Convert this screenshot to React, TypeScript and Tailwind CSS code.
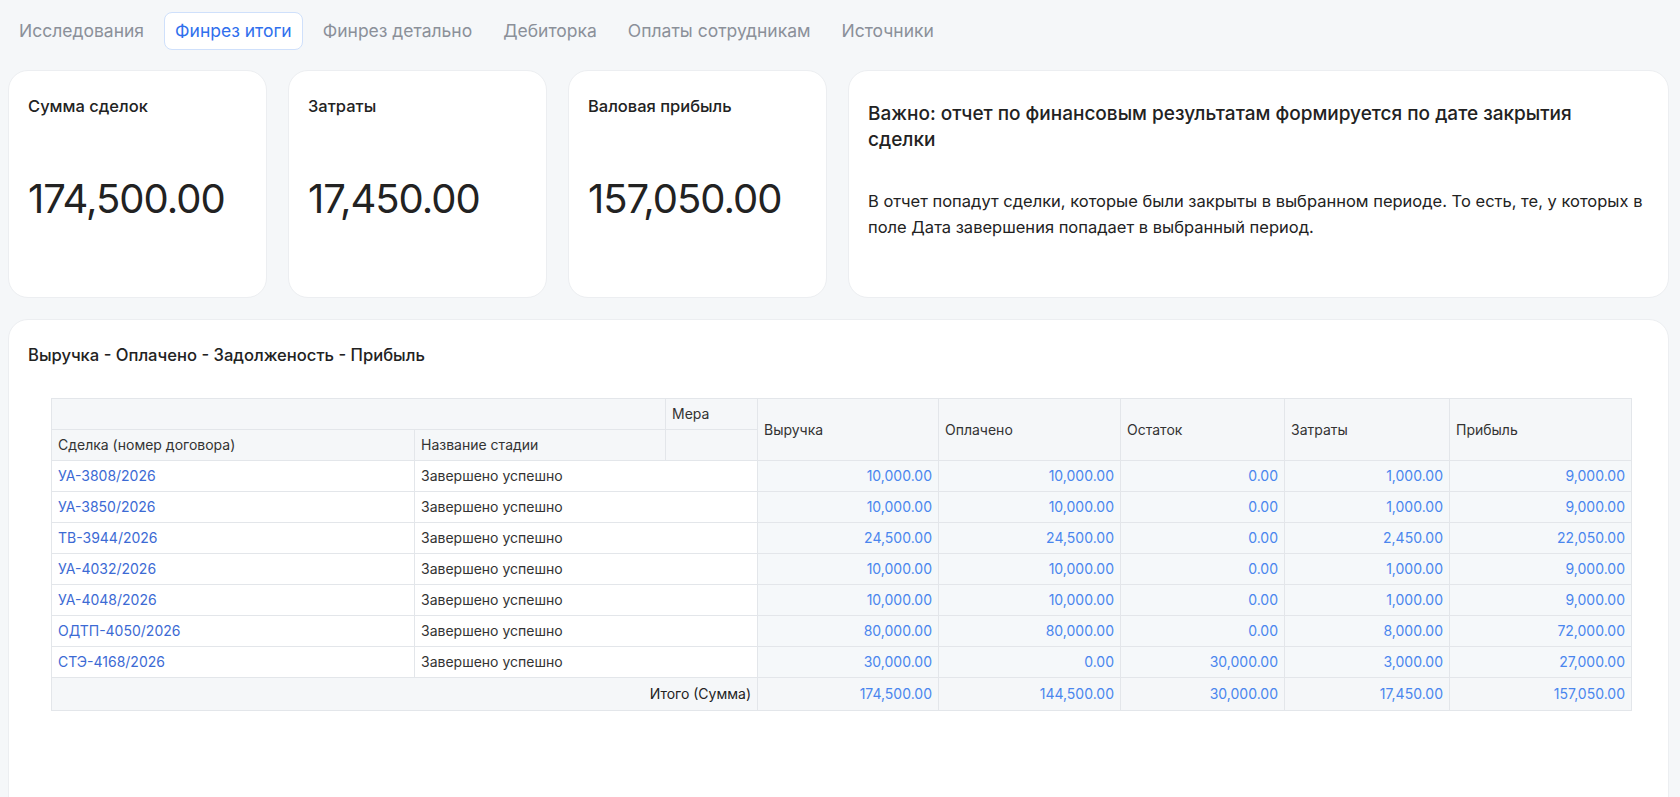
import React from "react";

const tabs = ["Исследования", "Финрез итоги", "Финрез детально", "Дебиторка", "Оплаты сотрудникам", "Источники"];

const rows = [
  ["УА-3808/2026", "10,000.00", "10,000.00", "0.00", "1,000.00", "9,000.00"],
  ["УА-3850/2026", "10,000.00", "10,000.00", "0.00", "1,000.00", "9,000.00"],
  ["ТВ-3944/2026", "24,500.00", "24,500.00", "0.00", "2,450.00", "22,050.00"],
  ["УА-4032/2026", "10,000.00", "10,000.00", "0.00", "1,000.00", "9,000.00"],
  ["УА-4048/2026", "10,000.00", "10,000.00", "0.00", "1,000.00", "9,000.00"],
  ["ОДТП-4050/2026", "80,000.00", "80,000.00", "0.00", "8,000.00", "72,000.00"],
  ["СТЭ-4168/2026", "30,000.00", "0.00", "30,000.00", "3,000.00", "27,000.00"],
];

const totals = ["174,500.00", "144,500.00", "30,000.00", "17,450.00", "157,050.00"];
const measures = ["Выручка", "Оплачено", "Остаток", "Затраты", "Прибыль"];

function StatCard({ title, value }: { title: string; value: string }) {
  return (
    <div className="w-[259px] h-[228px] shrink-0 rounded-[20px] bg-white border border-[#eceef1] px-[19px] pt-[23px]">
      <div className="text-[16.5px] leading-6 font-medium text-[#222]">{title}</div>
      <div className="mt-[57px] text-[40px] leading-[48px] text-[#222] font-normal tracking-[-1px]">{value}</div>
    </div>
  );
}

export default function App() {
  const border = "border border-[#e3e6ea]";
  return (
    <div
      className="min-h-screen bg-[#f5f7f9] pl-2 pr-[11px] text-[#222]"
      style={{ fontFamily: "Inter, 'Noto Sans', sans-serif" }}
    >
      <div className="flex gap-[9px] pt-3">
        {tabs.map((t, i) => (
          <div
            key={t}
            className={
              i === 1
                ? "h-[38px] px-[10px] flex items-center rounded-lg border border-[#cfe0fb] bg-white text-[#2f6fed] text-[17.5px]"
                : "h-[38px] px-[10px] flex items-center rounded-lg border border-transparent text-[#8b9099] text-[17.5px]"
            }
          >
            {t}
          </div>
        ))}
      </div>

      <div className="flex gap-[21px] mt-[20px]">
        <StatCard title="Сумма сделок" value="174,500.00" />
        <StatCard title="Затраты" value="17,450.00" />
        <StatCard title="Валовая прибыль" value="157,050.00" />
        <div className="flex-1 h-[228px] rounded-[20px] bg-white border border-[#eceef1] px-[19px] pt-[30px]">
          <div className="text-[19px] leading-[26px] font-medium text-[#222] pr-10">
            Важно: отчет по финансовым результатам формируется по дате закрытия сделки
          </div>
          <div className="mt-[35px] text-[16.5px] leading-[26px] text-[#222]">
            В отчет попадут сделки, которые были закрыты в выбранном периоде. То есть, те, у которых в поле Дата
            завершения попадает в выбранный период.
          </div>
        </div>
      </div>

      <div className="mt-[21px] rounded-t-[20px] bg-white border border-[#eceef1] px-[19px] pt-[23px] min-h-[520px]">
        <div className="text-[16.6px] leading-6 font-medium text-[#222]">Выручка - Оплачено - Задолженость - Прибыль</div>
        <div className="mt-[31px] ml-[23px]">
          <table className="w-[1580px] table-fixed border-collapse text-sm text-[#333]">
            <colgroup>
              <col className="w-[363px]" />
              <col className="w-[251px]" />
              <col className="w-[92px]" />
              <col className="w-[181px]" />
              <col className="w-[182px]" />
              <col className="w-[164px]" />
              <col className="w-[165px]" />
              <col className="w-[182px]" />
            </colgroup>
            <thead>
              <tr className="h-[31px] bg-[#f5f7f9]">
                <th colSpan={2} className={`${border} font-normal`}></th>
                <th className={`${border} font-normal text-left px-[6px]`}>Мера</th>
                {measures.map((m) => (
                  <th key={m} rowSpan={2} className={`${border} font-normal text-left px-[6px]`}>
                    {m}
                  </th>
                ))}
              </tr>
              <tr className="h-[31px] bg-[#f5f7f9]">
                <th className={`${border} font-normal text-left px-[6px]`}>Сделка (номер договора)</th>
                <th className={`${border} font-normal text-left px-[6px]`}>Название стадии</th>
                <th className={`${border} font-normal`}></th>
              </tr>
            </thead>
            <tbody>
              {rows.map((r) => (
                <tr key={r[0]} className="h-[31px]">
                  <td className={`${border} bg-white px-[6px] text-[#3c6ad4]`}>{r[0]}</td>
                  <td colSpan={2} className={`${border} bg-white px-[6px] text-[#333]`}>
                    Завершено успешно
                  </td>
                  {r.slice(1).map((v, i) => (
                    <td key={i} className={`${border} bg-[#f5f8fa] px-[6px] text-right text-[#4a86ee]`}>
                      {v}
                    </td>
                  ))}
                </tr>
              ))}
              <tr className="h-[33px] bg-[#f5f7f9]">
                <td colSpan={3} className={`${border} px-[6px] text-right text-[#222]`}>
                  Итого (Сумма)
                </td>
                {totals.map((v, i) => (
                  <td key={i} className={`${border} px-[6px] text-right text-[#4a86ee]`}>
                    {v}
                  </td>
                ))}
              </tr>
            </tbody>
          </table>
        </div>
      </div>
    </div>
  );
}
